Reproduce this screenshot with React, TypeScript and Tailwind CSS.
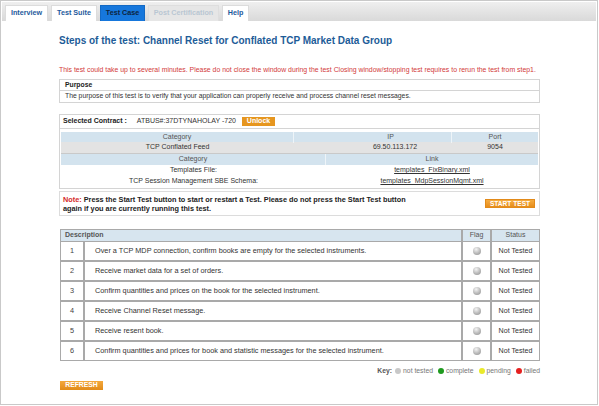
import React from "react";

const steps = [
  "Over a TCP MDP connection, confirm books are empty for the selected instruments.",
  "Receive market data for a set of orders.",
  "Confirm quantities and prices on the book for the selected instrument.",
  "Receive Channel Reset message.",
  "Receive resent book.",
  "Confirm quantities and prices for book and statistic messages for the selected instrument.",
];

function Tab({ label, w, kind }: { label: string; w: string; kind: "normal" | "active" | "disabled" }) {
  const cls =
    kind === "active"
      ? "bg-[#1677dc] text-[#0d2440] border-[#1369c4]"
      : kind === "disabled"
      ? "bg-[#e6e6e6] text-[#b9c6d3] border-[#dedede]"
      : "bg-white text-[#1e5a9c] border-[#dcdcdc]";
  return (
    <div className={`${w} h-[16px] flex items-center justify-center text-[7.2px] font-bold border border-b-0 ${cls}`}>
      {label}
    </div>
  );
}

function Ball() {
  return (
    <div className="w-[8px] h-[8px] rounded-full bg-[radial-gradient(circle_at_40%_30%,#f4f4f4_0%,#b9b9b9_55%,#8d8d8d_100%)]" />
  );
}

function Dot({ color }: { color: string }) {
  return <span className={`inline-block w-[6px] h-[6px] rounded-full ${color} mr-[2px]`} />;
}

export default function App() {
  return (
    <div className="w-[599px] h-[406px] bg-white font-['Liberation_Sans',Arial,sans-serif] text-[#333]">
      <div className="w-[598px] h-[405px] border border-[#c9c9c9] flex flex-col">
        <div className="mx-[1px] mt-[1px] h-[19px] bg-gradient-to-b from-[#efefef] to-[#d9d9d9] flex items-end gap-[3px] pl-[3px]">
          <Tab label="Interview" w="w-[43px]" kind="normal" />
          <Tab label="Test Suite" w="w-[46px]" kind="normal" />
          <Tab label="Test Case" w="w-[45px]" kind="active" />
          <Tab label="Post Certification" w="w-[71px]" kind="disabled" />
          <Tab label="Help" w="w-[27px]" kind="normal" />
        </div>

        <div className="pl-[58px] w-[539px] flex flex-col">
          <div className="mt-[14px] text-[10px] leading-[12px] font-bold text-[#1d5c98]">
            Steps of the test: Channel Reset for Conflated TCP Market Data Group
          </div>

          <div className="mt-[19px] text-[6.9px] leading-[8px] text-[#d23a3a] whitespace-nowrap">
            This test could take up to several minutes. Please do not close the window during the test Closing window/stopping test requires to rerun the test from step1.
          </div>

          {/* Purpose */}
          <div className="mt-[5px] border border-[#d4d4d4] text-[6.8px]">
            <div className="h-[11px] flex items-center pl-[5px] font-bold text-[#222] border-b border-[#d4d4d4]">Purpose</div>
            <div className="h-[11px] flex items-center pl-[5px]">
              The purpose of this test is to verify that your application can properly receive and process channel reset messages.
            </div>
          </div>

          {/* Selected contract */}
          <div className="mt-[11px] h-[15px] border border-[#d4d4d4] flex items-center pl-[3px] text-[7px]">
            <span className="font-bold text-[#222]">Selected Contract :</span>
            <span className="ml-[10px] text-[#333]">ATBUS#:37DTYNAHOLAY -720</span>
            <span className="ml-[6px] h-[9px] w-[33px] bg-[#e6961f] text-white font-bold flex items-center justify-center text-[7px]">
              Unlock
            </span>
          </div>

          {/* Feed table */}
          <div className="border border-t-0 border-[#d4d4d4] px-[1px] pt-[3px] pb-[1px] text-[7px] text-[#333]">
            <div className="grid grid-cols-[233px_158px_1fr] h-[10px] bg-[#d3e3ee] text-[#555]">
              <div className="flex items-center justify-center border-r border-[#eef4f8]">Category</div>
              <div className="flex items-center justify-center border-r border-[#eef4f8] pl-[36px]">IP</div>
              <div className="flex items-center justify-center">Port</div>
            </div>
            <div className="grid grid-cols-[233px_158px_1fr] h-[12px] bg-[#e3e3e3] border-b border-[#c9c9c9]">
              <div className="flex items-center justify-center">TCP Conflated Feed</div>
              <div className="flex items-center justify-center pl-[44px]">69.50.113.172</div>
              <div className="flex items-center justify-center">9054</div>
            </div>
            <div className="grid grid-cols-[265px_1fr] h-[11px] bg-[#d3e3ee] text-[#555]">
              <div className="flex items-center justify-center border-r border-[#eef4f8]">Category</div>
              <div className="flex items-center justify-center">Link</div>
            </div>
            <div className="grid grid-cols-[265px_1fr] h-[11px]">
              <div className="flex items-center justify-center">Templates File:</div>
              <div className="flex items-center justify-center underline">templates_FixBinary.xml</div>
            </div>
            <div className="grid grid-cols-[265px_1fr] h-[11px]">
              <div className="flex items-center justify-center">TCP Session Management SBE Schema:</div>
              <div className="flex items-center justify-center underline">templates_MdpSessionMgmt.xml</div>
            </div>
          </div>

          {/* Note */}
          <div className="mt-[2px] h-[25px] border border-[#dcdcdc] flex items-center justify-between pl-[3px] pr-[4px] text-[7.3px] leading-[9px]">
            <div className="font-bold text-[#222]">
              <span className="text-[#d42a2a]">Note:</span> Press the Start Test button to start or restart a Test. Please do not press the Start Test button
              <br />
              again if you are currently running this test.
            </div>
            <div className="h-[9px] w-[50px] bg-gradient-to-b from-[#f5ac40] to-[#e68d18] border border-[#e28a1a] text-white font-bold text-[6.6px] flex items-center justify-center">
              START TEST
            </div>
          </div>

          {/* Steps table */}
          <div className="mt-[13px] ml-[1px] border border-[#a9a9a9] bg-[#a9a9a9] flex flex-col gap-[2px] text-[7.3px]">
            <div className="grid grid-cols-[1fr_27px_47px] gap-[2px] h-[10px] text-[7px]">
              <div className="bg-[#d7e5ef] font-bold text-[#555] flex items-center pl-[4px]">Description</div>
              <div className="bg-[#d7e5ef] text-[#555] flex items-center justify-center">Flag</div>
              <div className="bg-[#d7e5ef] text-[#555] flex items-center justify-center">Status</div>
            </div>
            {steps.map((s, i) => (
              <div key={i} className="grid grid-cols-[22px_1fr_27px_47px] gap-[2px] h-[18px]">
                <div className="bg-white flex items-center justify-center text-[#444]">{i + 1}</div>
                <div className="bg-white flex items-center pl-[10px] text-[#333]">{s}</div>
                <div className="bg-white flex items-center justify-center">
                  <Ball />
                </div>
                <div className="bg-white flex items-center justify-center text-[#333] text-[7.1px]">Not Tested</div>
              </div>
            ))}
          </div>

          {/* Key */}
          <div className="mt-[6px] h-[8px] flex items-center justify-end text-[6.8px] text-[#777]">
            <span className="font-bold text-[#555] mr-[3px]">Key:</span>
            <Dot color="bg-[#c8c8c8]" />
            <span className="mr-[5px]">not tested</span>
            <Dot color="bg-[#1f9a1f]" />
            <span className="mr-[5px]">complete</span>
            <Dot color="bg-[#eaea2a]" />
            <span className="mr-[5px]">pending</span>
            <Dot color="bg-[#e52020]" />
            <span>failed</span>
          </div>

          {/* Refresh */}
          <div className="mt-[6px] ml-[1px] h-[9px] w-[43px] bg-gradient-to-b from-[#f3a83b] to-[#e28b17] text-white font-bold text-[6.8px] flex items-center justify-center">
            REFRESH
          </div>
        </div>
      </div>
    </div>
  );
}
